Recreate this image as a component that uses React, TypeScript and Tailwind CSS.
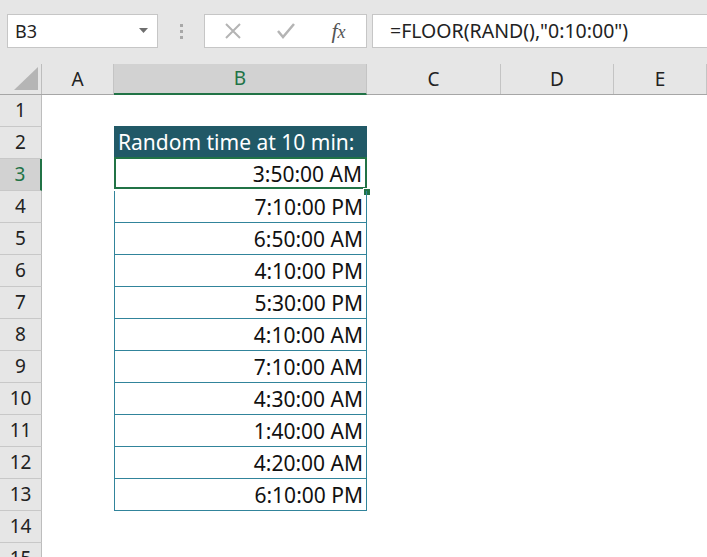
import React from 'react'

const times = [
  '3:50:00 AM',
  '7:10:00 PM',
  '6:50:00 AM',
  '4:10:00 PM',
  '5:30:00 PM',
  '4:10:00 AM',
  '7:10:00 AM',
  '4:30:00 AM',
  '1:40:00 AM',
  '4:20:00 AM',
  '6:10:00 PM',
]

const cols = ['A', 'B', 'C', 'D', 'E']
const colWidths = ['w-[72px]', 'w-[253px]', 'w-[134px]', 'w-[113px]', 'flex-1']

function RowHeader({ n }: { n: number }) {
  const sel = n === 3
  return (
    <div
      className={
        'w-[42px] shrink-0 h-full flex items-center justify-center border-b border-[#c8c8c8] text-[19px] ' +
        (sel
          ? 'bg-[#d2d2d2] text-[#217346] border-r-2 border-r-[#217346]'
          : 'bg-[#e6e6e6] text-[#222] border-r border-r-[#bdbdbd]')
      }
    >
      {n}
    </div>
  )
}

export default function App() {
  return (
    <div className="w-[707px] h-[557px] overflow-hidden bg-white font-['Noto_Sans',sans-serif]">
      {/* formula bar */}
      <div className="h-[64px] bg-[#e6e6e6] flex items-start pt-[14px] pl-[7px]">
        <div className="w-[151px] h-[34px] bg-white border border-[#c6c6c6] flex items-center justify-between pl-[7px] pr-[8px]">
          <span className="text-[18px] text-[#222]">B3</span>
          <svg width="10" height="6" viewBox="0 0 10 6">
            <path d="M0 0h9L4.5 5z" fill="#6e6e6e" />
          </svg>
        </div>
        <div className="w-[46px] h-[34px] flex flex-col items-center justify-center gap-[3px]">
          <div className="w-[3px] h-[3px] bg-[#a8a8a8]" />
          <div className="w-[3px] h-[3px] bg-[#a8a8a8]" />
          <div className="w-[3px] h-[3px] bg-[#a8a8a8]" />
        </div>
        <div className="w-[163px] h-[34px] bg-white border border-[#c6c6c6] flex items-center">
          <div className="w-[56px] flex justify-center">
            <svg width="18" height="18" viewBox="0 0 18 18">
              <path d="M2 2L16 16M16 2L2 16" stroke="#b4b4b4" strokeWidth="2" />
            </svg>
          </div>
          <div className="w-[50px] flex justify-center">
            <svg width="20" height="18" viewBox="0 0 20 18">
              <path d="M2 9l5 6L18 2" stroke="#b4b4b4" strokeWidth="2.5" fill="none" />
            </svg>
          </div>
          <div className="flex-1 flex justify-center">
            <span className="font-['Liberation_Serif',serif] italic text-[22px] text-[#555] leading-none">
              f<span className="text-[18px]">x</span>
            </span>
          </div>
        </div>
        <div className="ml-[5px] flex-1 h-[34px] bg-white border border-[#c6c6c6] border-r-0 flex items-center pl-[17px]">
          <span className="text-[19.5px] text-[#222]">=FLOOR(RAND(),"0:10:00")</span>
        </div>
      </div>

      {/* column headers */}
      <div className="h-[31px] flex bg-[#e6e6e6] border-b border-[#a6a6a6]">
        <div className="w-[42px] shrink-0 border-r border-[#bdbdbd] flex items-end justify-end pr-[3px] pb-[4px]">
          <svg width="24" height="23" viewBox="0 0 24 23">
            <path d="M24 0V23H0z" fill="#b5b5b5" />
          </svg>
        </div>
        {cols.map((c, i) => (
          <div
            key={c}
            className={
              colWidths[i] +
              ' shrink-0 flex items-center justify-center text-[19px] border-r border-[#c4c4c4] ' +
              (c === 'B'
                ? 'bg-[#d2d2d2] text-[#217346] border-b-2 border-b-[#217346] -mb-px'
                : 'text-[#222]')
            }
          >
            {c}
          </div>
        ))}
      </div>

      {/* rows */}
      <div className="flex flex-col">
        {Array.from({ length: 15 }, (_, k) => k + 1).map((n) => {
          const isHead = n === 2
          const idx = n - 3
          const hasTime = idx >= 0 && idx < times.length
          return (
            <div key={n} className="h-[32px] flex">
              <RowHeader n={n} />
              <div className="w-[72px] shrink-0" />
              <div className="w-[253px] shrink-0 relative">
                {isHead && (
                  <div className="h-full bg-[#215967] text-white text-[21px] flex items-center pl-[4px] pt-[2px] -mt-px">
                    Random time at 10 min:
                  </div>
                )}
                {hasTime && (
                  <div
                    className={
                      'h-full flex items-center justify-end pr-[3px] pt-[3px] text-[21px] text-[#111] ' +
                      (n === 3
                        ? 'border-2 border-[#217346] -mt-[2px] h-[34px]'
                        : 'border-x border-b border-[#31849b]')
                    }
                  >
                    {times[idx]}
                  </div>
                )}
                {n === 3 && (
                  <div className="absolute right-[-4px] bottom-[-5px] w-[8px] h-[8px] bg-[#217346] border border-white" />
                )}
              </div>
              <div className="flex-1" />
            </div>
          )
        })}
      </div>
    </div>
  )
}
